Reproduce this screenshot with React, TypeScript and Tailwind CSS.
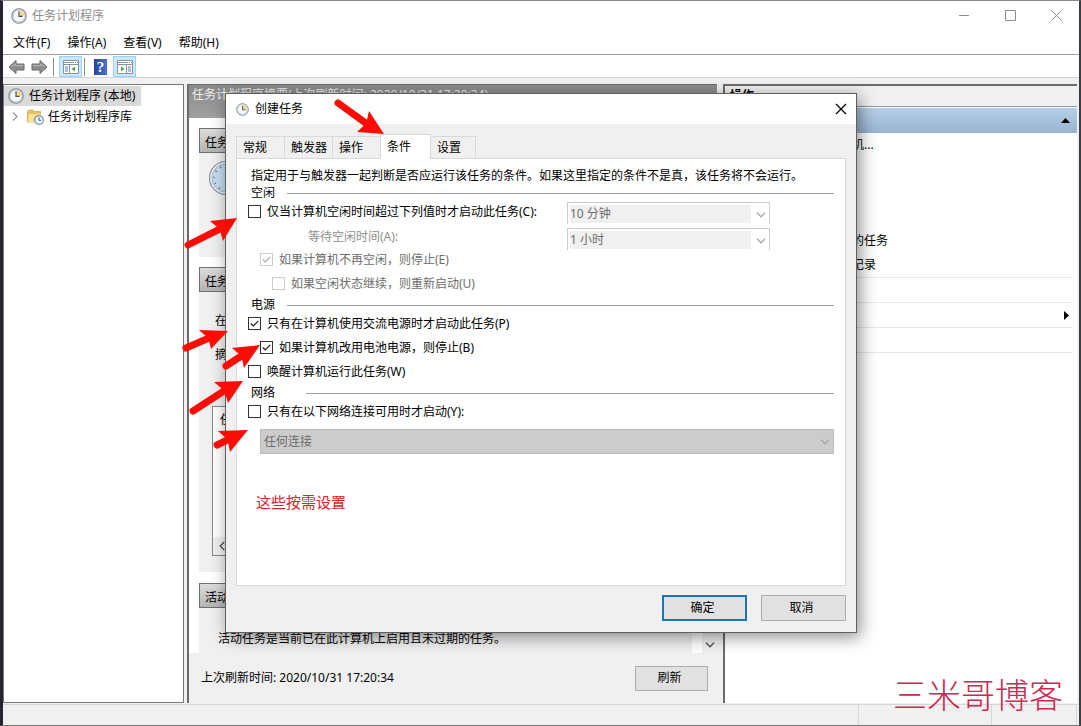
import type { ReactNode } from "react";

const menus = ["文件(F)", "操作(A)", "查看(V)", "帮助(H)"];
const actions = ["连接到另一台计算机...", "创建基本任务...", "创建任务...", "导入任务...", "显示所有正在运行的任务", "启用所有任务历史记录"];
const moreActions = ["AT 服务帐户配置", "查看", "刷新", "帮助"];

// tail, tip, and the two back corners of the head
const arrows = [
  { tail: [338, 103], tip: [384, 134], a: [369, 111], b: [357, 132] },
  { tail: [188, 245], tip: [237, 218], a: [210, 221], b: [223, 241] },
  { tail: [186, 348], tip: [228, 331], a: [199, 330], b: [211, 349] },
  { tail: [226, 366], tip: [260, 345], a: [232, 348], b: [244, 368] },
  { tail: [193, 411], tip: [243, 381], a: [214, 382], b: [228, 403] },
  { tail: [217, 445], tip: [248, 430], a: [218, 431], b: [230, 452] },
];

function Clock({ size }: { size: number }) {
  return (
    <svg width={size} height={size} viewBox="0 0 16 16" className="shrink-0">
      <circle cx="8" cy="8" r="7.2" fill="#e3eaf0" stroke="#7e8790" strokeWidth="1.1" />
      <circle cx="8" cy="8" r="5.7" fill="#f7f9fa" stroke="#b7c0c8" strokeWidth=".6" />
      <path d="M8 8V2.4A5.6 5.6 0 0 1 13.6 8Z" fill="#f2d98c" />
      <path d="M8 3.5V8.4H11.6" fill="none" stroke="#46525e" strokeWidth="1.2" />
    </svg>
  );
}

function BigClock() {
  return (
    <svg width="36" height="36" viewBox="0 0 36 36" className="shrink-0">
      <circle cx="18" cy="18" r="16.5" fill="#e8eef4" stroke="#8995a0" strokeWidth="1.2" />
      <circle cx="18" cy="18" r="14" fill="#c5dbee" stroke="#a7b6c4" />
      <circle cx="18" cy="18" r="12" fill="none" stroke="#5f7386" strokeWidth="2" strokeDasharray="1 5.28" />
      <path d="M18 8V20H26" fill="none" stroke="#34495e" strokeWidth="2" />
    </svg>
  );
}

function BackArrow({ flip }: { flip?: boolean }) {
  return (
    <svg width="17" height="16" viewBox="0 0 17 16" className={flip ? "-scale-x-100" : ""}>
      <path d="M1 8 8 1.5V5H16V11H8V14.5Z" fill="#8d8d8d" stroke="#6a6a6a" />
      <path d="M3 8 7 4.5V6.5H15" fill="none" stroke="#b9b9b9" />
    </svg>
  );
}

function PaneIcon({ right }: { right?: boolean }) {
  return (
    <svg width="16" height="14" viewBox="0 0 16 14">
      <path d="M.5.5H15.5V13.5H.5Z" fill="#fff" stroke="#8a939c" />
      <path d="M1 2.5H11M1 4.5H15" stroke="#8a939c" />
      <path d="M12 2.5H15" stroke="#6b7683" strokeDasharray="1 1" />
      {right ? (
        <>
          <path d="M9.5 5V13" stroke="#8a939c" />
          <path d="M11 7H14M11 9H14M11 11H14" stroke="#5582b5" />
          <path d="M4 6.5 7.5 9 4 11.5Z" fill="#55a53d" />
        </>
      ) : (
        <>
          <path d="M6.5 5V13" stroke="#8a939c" />
          <path d="M2 7H5M2 9H5M2 11H5" stroke="#5582b5" />
          <path d="M12 6.5 8.5 9 12 11.5Z" fill="#55a53d" />
        </>
      )}
    </svg>
  );
}

function FolderClock() {
  return (
    <svg width="17" height="16" viewBox="0 0 17 16" className="shrink-0">
      <path d="M.5 2.5 1.5 1H6L7 2.5H13.5V13H.5Z" fill="#e9c25f" stroke="#cda548" strokeWidth=".7" />
      <path d="M2 5H14V13.5H1Z" fill="#fbe196" />
      <circle cx="12" cy="11" r="4.3" fill="#eef5fb" stroke="#5d7f9e" strokeWidth="1.1" />
      <path d="M12 8.5V11.3H14" fill="none" stroke="#3d5c7a" />
    </svg>
  );
}

function Chevron({ className = "" }: { className?: string }) {
  return (
    <svg width="10" height="6" viewBox="0 0 10 6" className={className}>
      <path d="M1 .8 5 4.8 9 .8" fill="none" stroke="currentColor" strokeWidth="1.3" />
    </svg>
  );
}

function Check({ id, label, checked, disabled, className = "" }: { id: string; label: string; checked?: boolean; disabled?: boolean; className?: string }) {
  return (
    <div className={`flex h-6 items-center gap-[6px] ${disabled ? "text-[#6d6d6d]" : ""} ${className}`}>
      <span className="relative flex size-[13px]">
        <input
          id={id}
          type="checkbox"
          defaultChecked={checked}
          disabled={disabled}
          className="peer size-[13px] appearance-none border border-[#333] bg-white disabled:border-[#ccc]"
        />
        <svg viewBox="0 0 13 13" className="pointer-events-none absolute inset-0 hidden text-[#222] peer-checked:block peer-disabled:text-[#aaa]">
          <path d="M2.8 6.5 5.3 9 10.3 3.8" fill="none" stroke="currentColor" strokeWidth="1.2" />
        </svg>
      </span>
      <label htmlFor={id} className="pt-[2px]">{label}</label>
    </div>
  );
}

function Heading({ children, wide }: { children: ReactNode; wide?: boolean }) {
  return (
    <div className="flex h-4 items-center pl-[3px]">
      <h3 className={`pt-1 leading-[18px] ${wide ? "w-[55px]" : "w-9"}`}>{children}</h3>
      <span className="mt-1 h-px flex-1 bg-[#a0a0a0]" />
    </div>
  );
}

function TimeSelect({ id, value, label }: { id: string; value: string; label: string }) {
  return (
    <div className="relative flex h-[22px] w-[203px] border border-b-0 border-[#ccc] bg-white p-[2px] pb-0 text-[#6d6d6d]">
      <select id={id} aria-label={label} disabled className="h-[18px] w-[181px] appearance-none bg-[#f0f0f0] text-xs leading-4 disabled:opacity-100">
        <option>{value}</option>
      </select>
      <Chevron className="pointer-events-none absolute right-[3px] top-[9px] text-[#a8a8a8]" />
    </div>
  );
}

function GroupTitle({ children }: { children: ReactNode }) {
  return (
    <h2 className="flex h-[25px] items-center border border-[#707070] bg-linear-to-b from-[#dcdcdc] to-[#b4b4b4] pl-[5px] pt-1">
      {children}
    </h2>
  );
}

function Tab({ children, active, last }: { children: ReactNode; active?: boolean; last?: boolean }) {
  return (
    <button
      role="tab"
      aria-selected={active ? true : false}
      className={
        active
          ? "relative z-10 h-[25px] w-[51px] border border-b-0 border-[#d9d9d9] bg-white pl-[6px] text-left"
          : `-mr-px h-[23px] border border-[#d9d9d9] bg-[#f0f0f0] pl-[6px] text-left ${last ? "w-[45px] border-l-0 pl-1" : "w-[49px]"}`
      }
    >
      {children}
    </button>
  );
}

function TaskDialog() {
  return (
    <section
      role="dialog"
      aria-labelledby="dialog-title"
      className="absolute left-[222px] top-[92px] z-20 flex h-[540px] w-[632px] flex-col border border-[#5f5f5f] bg-[#f0f0f0] shadow-[3px_4px_16px_rgba(0,0,0,0.45)]"
    >
      <header className="flex h-[30px] shrink-0 items-center gap-[6px] bg-white pl-[10px] pr-[9px]">
        <Clock size={13} />
        <h2 id="dialog-title" className="flex-1">创建任务</h2>
        <button aria-label="关闭">
          <svg width="12" height="12" viewBox="0 0 12 12" className="text-black">
            <path d="M1 1 11 11M11 1 1 11" stroke="currentColor" strokeWidth="1.2" />
          </svg>
        </button>
      </header>

      <div className="flex flex-1 flex-col px-[10px] pt-[10px]">
        <div role="tablist" className="flex items-end">
          <Tab>常规</Tab>
          <Tab>触发器</Tab>
          <Tab>操作</Tab>
          <Tab active>条件</Tab>
          <Tab last>设置</Tab>
        </div>

        <div role="tabpanel" className="-mt-px flex-1 border border-[#d9d9d9] bg-white px-[11px] pt-2">
          <p className="h-4 whitespace-nowrap pl-[3px] leading-[18px]">
            指定用于与触发器一起判断是否应运行该任务的条件。如果这里指定的条件不是真，该任务将不会运行。
          </p>

          <Heading>空闲</Heading>
          <div className="flex">
            <div className="w-[319px]">
              <Check id="idle" label="仅当计算机空闲时间超过下列值时才启动此任务(C):" />
              <div className="flex h-6 items-end pl-[60px] text-[#8f8f8f]">
                <label htmlFor="wait" className="leading-5">等待空闲时间(A):</label>
              </div>
              <Check id="idle-stop" label="如果计算机不再空闲，则停止(E)" checked disabled className="pl-3" />
              <Check id="idle-restart" label="如果空闲状态继续，则重新启动(U)" disabled className="pl-6" />
            </div>
            <div className="flex flex-col gap-1 pt-[3px]">
              <TimeSelect id="idle-time" value="10 分钟" label="空闲时间" />
              <TimeSelect id="wait" value="1 小时" label="等待空闲时间" />
            </div>
          </div>

          <Heading>电源</Heading>
          <Check id="ac" label="只有在计算机使用交流电源时才启动此任务(P)" checked />
          <Check id="battery" label="如果计算机改用电池电源，则停止(B)" checked className="pl-3" />
          <Check id="wake" label="唤醒计算机运行此任务(W)" />

          <Heading wide>网络</Heading>
          <Check id="network" label="只有在以下网络连接可用时才启动(Y):" />
          <div className="relative ml-3 mt-[6px] text-[#6d6d6d]">
            <select aria-label="网络连接" disabled className="block h-[25px] w-full appearance-none border border-[#bcbcbc] bg-[#ccc] pl-[3px] text-xs disabled:opacity-100">
              <option>任何连接</option>
            </select>
            <Chevron className="pointer-events-none absolute right-1 top-[10px] text-[#a5a5a5]" />
          </div>

          <p className="mt-9 pl-2 text-[15px] leading-6 text-[#d9262c]">这些按需设置</p>
        </div>

        <footer className="flex h-[46px] shrink-0 justify-end gap-[14px] pt-[9px]">
          <button className="h-[26px] w-[85px] border-2 border-[#1a75b8] bg-[#e1e1e1] pr-1">确定</button>
          <button className="h-[26px] w-[85px] border border-[#adadad] bg-[#e1e1e1] pr-1">取消</button>
        </footer>
      </div>
    </section>
  );
}

function Arrows() {
  return (
    <svg className="pointer-events-none absolute -left-[3px] -top-px z-30 h-[480px] w-[420px]" viewBox="0 0 420 480" fill="#fb0d06">
      {arrows.map(({ tail, tip, a, b }) => {
        const mx = (a[0] + b[0]) / 2;
        const my = (a[1] + b[1]) / 2;
        const nx = mx + (tip[0] - mx) * 0.15;
        const ny = my + (tip[1] - my) * 0.15;
        return (
          <g key={tail.join()}>
            <path d={`M${tail}L${nx} ${ny}`} stroke="#fb0d06" strokeWidth="7" strokeLinecap="round" />
            <path d={`M${tip}L${a}L${nx} ${ny}L${b}Z`} />
          </g>
        );
      })}
    </svg>
  );
}

export default function App() {
  return (
    <div className="relative flex h-screen min-h-[726px] flex-col overflow-hidden border-b border-l-[3px] border-r-2 border-t border-b-[#777] border-l-[#25262c] border-r-[#3a3c42] border-t-[#8a8a8a] bg-[#f0f0f0] font-['Noto_Sans','Noto_Sans_CJK_SC',sans-serif] text-xs text-black">
      <header className="flex h-[29px] shrink-0 items-center gap-[5px] bg-white pl-2 pr-[17px] text-[#8c8c8c]">
        <Clock size={16} />
        <h1 className="flex-1">任务计划程序</h1>
        <div className="flex gap-[35px]">
          <button aria-label="最小化">
            <svg width="11" height="11" viewBox="0 0 11 11"><path d="M0 5.5H10" stroke="currentColor" /></svg>
          </button>
          <button aria-label="最大化">
            <svg width="11" height="11" viewBox="0 0 11 11"><path d="M.5.5H10.5V10.5H.5Z" fill="none" stroke="currentColor" /></svg>
          </button>
          <button aria-label="关闭">
            <svg width="11" height="11" viewBox="0 0 11 11"><path d="M.5.5 10.5 10.5M10.5.5.5 10.5" stroke="currentColor" /></svg>
          </button>
        </div>
      </header>

      <nav className="flex h-[25px] shrink-0 items-center gap-[17px] border-b border-[#a0a0a0] bg-white pl-[10px] pt-[2px]">
        {menus.map((m) => (
          <button key={m}>{m}</button>
        ))}
      </nav>

      <div className="flex h-[23px] shrink-0 items-center border-b border-[#d4d4d4] bg-white pl-[5px] pt-px">
        <button aria-label="后退"><BackArrow /></button>
        <button aria-label="前进" className="ml-[6px]"><BackArrow flip /></button>
        <span className="ml-[5px] h-[18px] w-px bg-[#8c8c8c]" />
        <button aria-label="显示控制台树" className="ml-[5px] flex h-[21px] w-[23px] items-center justify-center border border-[#99d1ff] bg-[#cce8ff]">
          <PaneIcon />
        </button>
        <span className="ml-[2px] h-[18px] w-px bg-[#8c8c8c]" />
        <button aria-label="帮助" className="ml-[9px] flex h-4 w-[13px] items-center justify-center bg-linear-to-r from-[#2544a0] to-[#4a70cf] font-['Liberation_Serif',serif] text-[15px] font-bold leading-4 text-white">
          ?
        </button>
        <button aria-label="显示操作窗格" className="ml-[6px] flex h-[21px] w-[23px] items-center justify-center border border-[#99d1ff] bg-[#cce8ff]">
          <PaneIcon right />
        </button>
      </div>

      <main className="flex min-h-0 flex-1 pt-[6px]">
        <aside className="w-[181px] shrink-0 border border-[#777] bg-white pt-px">
          <div className="flex h-5 w-[137px] items-center gap-[5px] whitespace-nowrap bg-[#d9d9d9] pl-1">
            <Clock size={16} />
            任务计划程序 (本地)
          </div>
          <div className="flex h-[21px] items-center pl-2">
            <svg width="6" height="9" viewBox="0 0 6 9"><path d="M1 .5 5 4.5 1 8.5" fill="none" stroke="#9a9a9a" strokeWidth="1.3" /></svg>
            <span className="ml-[9px] mr-1"><FolderClock /></span>
            任务计划程序库
          </div>
        </aside>

        <section className="ml-[3px] flex min-w-0 flex-1 flex-col border-l-2 border-t border-[#6b6b6b] bg-[#f0f0f0]">
          <div className="h-[33px] shrink-0 bg-linear-to-b from-[#8a8a8a] to-[#a0a0a0] pl-[3px] leading-5 text-[#ececec]">
            任务计划程序摘要(上次刷新时间: 2020/10/31 17:20:34)
          </div>
          <div className="flex min-h-0 flex-1">
            <div className="flex-1 bg-white px-[10px] pt-[10px]">
              <div className="mb-[10px] h-[129px] bg-[#f0f0f0]">
                <GroupTitle>任务</GroupTitle>
                <div className="pl-[9px] pt-[7px]"><BigClock /></div>
              </div>
              <div className="mb-[11px] h-[305px] bg-[#f0f0f0]">
                <GroupTitle>任务</GroupTitle>
                <p className="pl-4 pt-5 leading-[18px]">在</p>
                <p className="pl-4 pt-4 leading-[18px]">摘要</p>
                <div className="ml-[13px] mt-[42px] flex h-[150px] flex-col justify-between border border-[#828790] bg-white">
                  <span className="pl-[7px] pt-[5px]">任务</span>
                  <div className="flex h-[18px] items-center bg-[#f0f0f0] pl-1 text-[#505050]">
                    <Chevron className="rotate-90" />
                  </div>
                </div>
              </div>
              <div className="h-[70px] bg-[#f0f0f0]">
                <GroupTitle>活动</GroupTitle>
                <p className="pl-[19px] pt-[22px] leading-[18px]">活动任务是当前已在此计算机上启用且未过期的任务。</p>
              </div>
            </div>
            <div className="flex w-[15px] items-end justify-center pb-[5px] text-[#505050]">
              <Chevron />
            </div>
          </div>
          <footer className="flex h-[50px] shrink-0 items-center justify-between pl-3 pr-[9px]">
            <span>上次刷新时间: 2020/10/31 17:20:34</span>
            <button className="h-[25px] w-[73px] border border-[#adadad] bg-[#e1e1e1] pr-1">刷新</button>
          </footer>
        </section>

        <aside className="ml-[6px] mr-[2px] w-[354px] shrink-0 border-l-2 border-t-2 border-[#6b6b6b] bg-white">
          <h2 className="h-[21px] border-b border-[#8c99a5] bg-[#f0f0f0] pl-[5px] font-bold leading-5">操作</h2>
          <div className="mt-px flex h-[25px] items-center justify-end bg-linear-to-b from-[#b7d0e8] to-[#98b3d2] pr-[7px]">
            <svg width="9" height="5" viewBox="0 0 9 5"><path d="M4.5 0 9 5H0Z" fill="#000" /></svg>
          </div>
          <ul>
            {actions.map((a) => (
              <li key={a} className="flex h-6 items-center pl-[31px]">{a}</li>
            ))}
            {moreActions.map((a) => (
              <li key={a} className="mr-[5px] flex h-[25px] items-center justify-between border-t border-[#e8e8e8] pl-[31px] pr-[3px]">
                {a}
                {a === "查看" && <svg width="5" height="9" viewBox="0 0 5 9"><path d="M0 0 5 4.5 0 9Z" fill="#000" /></svg>}
              </li>
            ))}
          </ul>
        </aside>
      </main>

      <footer className="mt-px flex h-[21px] shrink-0 justify-end border-t border-[#d7d7d7]">
        <span className="w-[133px] border-l border-[#d7d7d7]" />
        <span className="mr-[2px] w-[86px] border-x border-[#d7d7d7]" />
      </footer>

      <TaskDialog />
      <Arrows />
      <p className="absolute bottom-2 right-4 z-30 font-['Noto_Sans_CJK_SC',sans-serif] text-[34px] font-light leading-[46px] text-[#cc2850]">三米哥博客</p>
    </div>
  );
}
